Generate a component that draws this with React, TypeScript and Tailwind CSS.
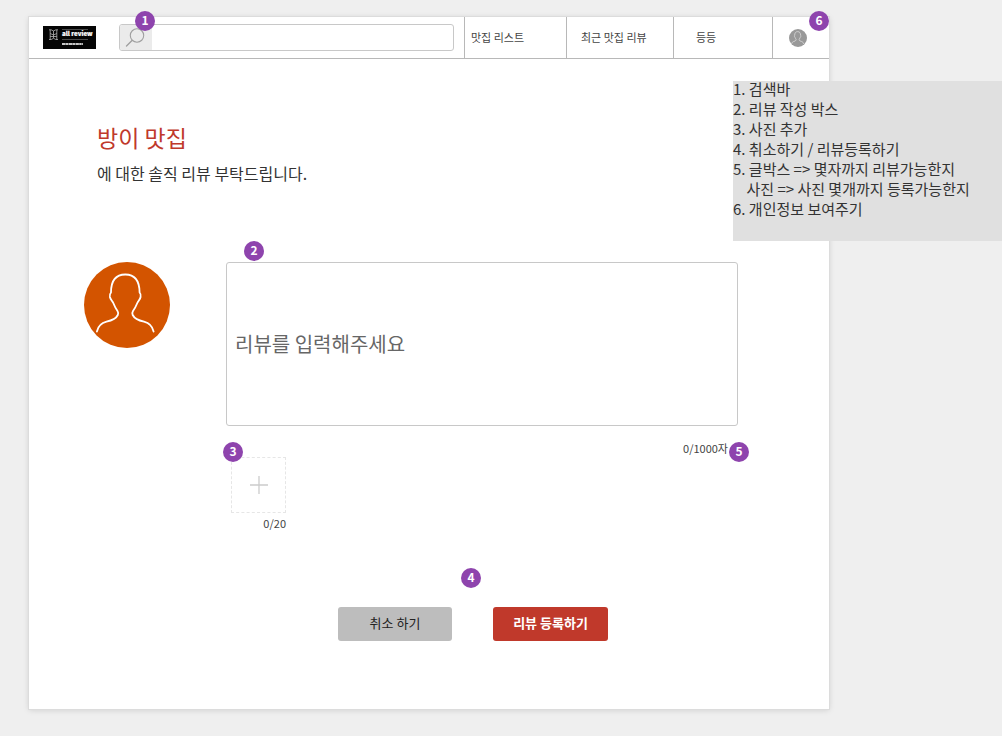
import { useState } from "react";

function Badge({ label, className }: { label: string; className: string }) {
  return (
    <span
      className={`absolute z-10 flex size-5 items-center justify-center rounded-full bg-[#8e44ad] pb-0.5 text-xs leading-4 font-bold text-white ${className}`}
    >
      {label}
    </span>
  );
}

function PersonOutline({ className, strokeWidth }: { className: string; strokeWidth: number }) {
  return (
    <svg viewBox="0 0 86 86" className={className} fill="none" stroke="currentColor" strokeWidth={strokeWidth} strokeLinecap="round" strokeLinejoin="round" aria-hidden="true">
      <path d="M12.900 69.500C14 64.500 17.500 61 22.500 59.700C28 58.500 32 56.800 33.800 53C34.600 51.500 34.300 50.300 33.500 49C31.500 46.300 30.300 43.500 29.300 41C28.300 38.800 26.600 37.800 25.900 35C25.500 33.200 25.800 31.800 27 30.500C27 19.500 31.500 12.500 41.300 12.500C51 12.500 55.500 19.500 55.600 30.500C56.800 31.800 57 33.200 56.600 35C56 37.800 54.300 38.800 53.300 41C52.300 43.500 51 46.300 49 49C48.200 50.300 48 51.500 48.700 53C50.500 56.800 54.500 58.500 60 59.700C65 61 68.500 64.500 69.600 69.500" />
    </svg>
  );
}

function Logo() {
  return (
    <a href="#" aria-label="all review" className="shrink-0">
      <svg width="53" height="23" viewBox="0 0 53 23" aria-hidden="true">
        <rect width="53" height="23" fill="#050505" />
        <g fill="none" stroke="#b5b5b5" strokeWidth="0.8">
          <path d="M6 3.800h2.200l2.300 1.200 2.300-1.200H15M6 13.500h2.200l2.300-1.200 2.300 1.200H15M7.200 4v9.500M13.800 4v9.500M7.200 7.500l3.300 1.500 3.300-1.500M10.500 5v7M7.200 10.500h6.600" />
          <path d="M19 3.500h26M19 13.500h26" stroke="#777777" strokeWidth="0.6" />
        </g>
        <text x="19" y="10.400" fill="#ffffff" stroke="#ffffff" strokeWidth="0.2" fontSize="6.2" fontWeight="900" fontFamily="'Noto Sans CJK KR', sans-serif">all review</text>
        <path d="M19 18h21" stroke="#c8c8c8" strokeWidth="1.800" strokeDasharray="3.500 0.300 2.500 0.400" />
      </svg>
    </a>
  );
}

const notes = [
  "1. 검색바",
  "2. 리뷰 작성 박스",
  "3. 사진 추가",
  "4. 취소하기 / 리뷰등록하기",
  "5. 글박스 => 몇자까지 리뷰가능한지",
  "    사진 => 사진 몇개까지 등록가능한지",
  "6. 개인정보 보여주기",
];

export default function App() {
  const [review, setReview] = useState("");

  return (
    <div className="relative min-h-screen bg-[#efefef] pt-[17px] pb-[27px] pl-[29px] font-['Noto_Sans_CJK_KR',sans-serif] text-[#333333]">
      <div className="relative w-full max-w-[800px] bg-white pb-[68px] shadow-[0_0_0_1px_#dcdcdc,0_1px_6px_rgba(0,0,0,0.15)]">
        <header className="flex h-[42px] items-stretch border-b border-[#b8b8b8] text-[11px]">
          <div className="flex flex-1 items-center gap-[23px] pr-[10px] pl-[14px]">
            <Logo />
            <form role="search" className="relative flex h-[27px] flex-1 rounded-[3px] border border-[#c8c8c8] bg-white" onSubmit={(e) => e.preventDefault()}>
              <button type="submit" aria-label="검색" className="flex w-8 items-center rounded-l-[2px] bg-[#ebebeb] pl-[5px] text-[#a0a0a0]">
                <svg width="20" height="20" viewBox="0 0 20 20" fill="none" stroke="currentColor" aria-hidden="true">
                  <circle cx="12" cy="7.500" r="6.700" strokeWidth="1.100" />
                  <path d="M7 12.500L1.500 18" strokeWidth="1.400" strokeLinecap="round" />
                </svg>
              </button>
              <input type="search" aria-label="맛집 검색" className="min-w-0 flex-1 bg-transparent px-2 outline-none" />
              <Badge label="1" className="-top-[14px] left-[15px]" />
            </form>
          </div>
          <nav className="flex items-stretch text-[#444444]">
            <a href="#" className="flex w-[102px] items-center border-l border-[#b8b8b8] pl-[6px]">맛집 리스트</a>
            <a href="#" className="flex w-[107px] items-center border-l border-[#b8b8b8] pl-[14px]">최근 맛집 리뷰</a>
            <a href="#" className="flex w-[99px] items-center border-l border-[#b8b8b8] pl-[22px]">등등</a>
            <a href="#" aria-label="개인정보" className="relative flex w-[57px] items-center border-l border-[#b8b8b8] pl-4">
              <span className="flex size-[18px] items-center justify-center rounded-full bg-[#999999] text-[#e0e0e0]">
                <PersonOutline className="size-[18px]" strokeWidth={3.5} />
              </span>
              <Badge label="6" className="-top-[6px] right-0" />
            </a>
          </nav>
        </header>

        <main>
          <div className="px-[68px] pt-[62px]">
            <h1 className="text-[23px] leading-8 text-[#c0392b]">방이 맛집</h1>
            <p className="mt-2 text-base leading-6">에 대한 솔직 리뷰 부탁드립니다.</p>
          </div>

          <form className="mt-[77px] flex items-start gap-14 pr-[91px] pl-[55px]" onSubmit={(e) => e.preventDefault()}>
            <div className="size-[86px] shrink-0 rounded-full bg-[#d35400] text-white">
              <PersonOutline className="size-[86px]" strokeWidth={1.8} />
            </div>
            <div className="min-w-0 flex-1">
              <div className="relative">
                <textarea
                  aria-label="리뷰"
                  maxLength={1000}
                  value={review}
                  onChange={(e) => setReview(e.target.value)}
                  placeholder="리뷰를 입력해주세요"
                  className="block h-[164px] w-full resize-none rounded-[3px] border border-[#c8c8c8] bg-white px-2 pt-[65px] text-xl leading-8 outline-none placeholder:text-[#666666]"
                />
                <Badge label="2" className="-top-[21px] left-[18px]" />
              </div>
              <div className="relative mt-[14px] pr-[10px] text-right text-[11px] leading-4 text-[#444444]">
                {review.length}/1000자
                <Badge label="5" className="top-[2px] -right-[11px]" />
              </div>
              <div className="relative mt-px ml-[5px] w-[55px]">
                <button type="button" aria-label="사진 추가" className="flex h-14 w-full items-center justify-center border border-dashed border-[#e6e6e6] text-[#cccccc]">
                  <svg width="18" height="18" viewBox="0 0 18 18" stroke="currentColor" aria-hidden="true">
                    <path d="M9 0v18M0 9h18" strokeWidth="1.300" />
                  </svg>
                </button>
                <p className="mt-[2px] text-right text-[11px] leading-4 text-[#444444]">0/20</p>
                <Badge label="3" className="-top-[15px] -left-2" />
              </div>
              <div className="relative mt-[76px] ml-28 flex w-fit gap-[41px] text-[13px] leading-5">
                <button type="button" className="h-[34px] w-[114px] rounded-[3px] bg-[#bdbdbd] pb-0.5 text-[#222222]">취소 하기</button>
                <button type="submit" className="h-[34px] w-[115px] rounded-[3px] bg-[#c0392b] pb-0.5 font-bold text-white">리뷰 등록하기</button>
                <Badge label="4" className="-top-[39px] left-[123px]" />
              </div>
            </div>
          </form>
        </main>
      </div>

      <aside className="absolute top-[81px] right-0 flex h-40 w-[269px] bg-[#e0e0e0] text-[15px] leading-5 whitespace-pre">
        <div className="-mt-0.5">
          {notes.map((note) => (
            <p key={note}>{note}</p>
          ))}
        </div>
      </aside>
    </div>
  );
}
